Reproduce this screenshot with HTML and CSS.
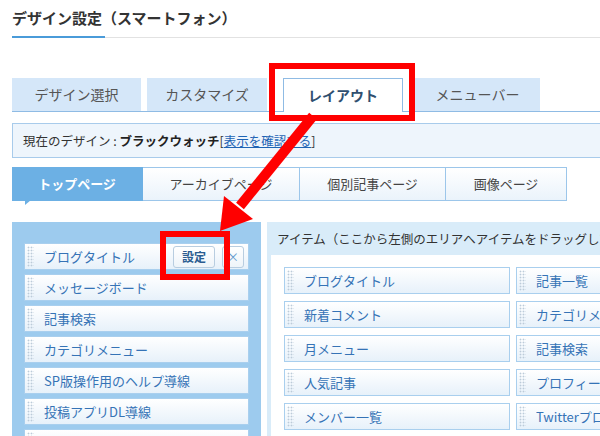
FILE: index.html
```html
<!DOCTYPE html>
<html lang="ja">
<head>
    <meta charset="UTF-8">
    <title>デザイン設定（スマートフォン）</title>
    <link rel="stylesheet" href="styles.css">
</head>
<body>
    <div class="page">
        <div class="title-bar">
            <h1 class="title">デザイン設定（スマートフォン）</h1>
        </div>

        <ul class="tabs">
            <li class="tab tab-design">デザイン選択</li>
            <li class="tab tab-custom">カスタマイズ</li>
            <li class="tab tab-layout active">レイアウト</li>
            <li class="tab tab-menu">メニューバー</li>
        </ul>

        <div class="current">
            現在のデザイン : <b>ブラックウォッチ</b>[<a href="#">表示を確認する</a>]
        </div>

        <ul class="subtabs">
            <li class="subtab sub-top active">トップページ</li>
            <li class="subtab sub-archive">アーカイブページ</li>
            <li class="subtab sub-entry">個別記事ページ</li>
            <li class="subtab sub-image">画像ページ</li>
        </ul>

        <div class="layout">
            <div class="area">
                <div class="item">
                    <span class="grip"></span>
                    <span class="item-name">ブログタイトル</span>
                    <span class="btn btn-setting">設定</span>
                    <span class="btn btn-close">×</span>
                </div>
                <div class="item"><span class="grip"></span><span class="item-name">メッセージボード</span></div>
                <div class="item"><span class="grip"></span><span class="item-name">記事検索</span></div>
                <div class="item"><span class="grip"></span><span class="item-name">カテゴリメニュー</span></div>
                <div class="item"><span class="grip"></span><span class="item-name">SP版操作用のヘルプ導線</span></div>
                <div class="item"><span class="grip"></span><span class="item-name">投稿アプリDL導線</span></div>
                <div class="item"><span class="grip"></span><span class="item-name"></span></div>
            </div>

            <div class="items-panel">
                <div class="items-head">アイテム（ここから左側のエリアへアイテムをドラッグしてください）</div>
                <div class="items-grid">
                    <div class="item"><span class="grip"></span><span class="item-name">ブログタイトル</span></div>
                    <div class="item"><span class="grip"></span><span class="item-name">記事一覧</span></div>
                    <div class="item"><span class="grip"></span><span class="item-name">新着コメント</span></div>
                    <div class="item"><span class="grip"></span><span class="item-name">カテゴリメニュー</span></div>
                    <div class="item"><span class="grip"></span><span class="item-name">月メニュー</span></div>
                    <div class="item"><span class="grip"></span><span class="item-name">記事検索</span></div>
                    <div class="item"><span class="grip"></span><span class="item-name">人気記事</span></div>
                    <div class="item"><span class="grip"></span><span class="item-name">プロフィール</span></div>
                    <div class="item"><span class="grip"></span><span class="item-name">メンバー一覧</span></div>
                    <div class="item"><span class="grip"></span><span class="item-name">Twitterプロフィール</span></div>
                </div>
            </div>
        </div>

        <!-- annotations drawn over the screenshot -->
        <div class="mark mark-tab"></div>
        <div class="mark mark-btn"></div>
        <svg class="arrow" width="600" height="436" viewBox="0 0 600 436">
            <line x1="313" y1="116" x2="240" y2="206" stroke="#f00" stroke-width="10"/>
            <polygon points="220,231 253,219 224,196" fill="#f00"/>
        </svg>
    </div>
</body>
</html>
```

FILE: styles.css
```css
* {
    box-sizing: border-box;
}
body {
    margin: 0;
    width: 600px;
    height: 436px;
    overflow: hidden;
    background-color: #fff;
    font-family: "Noto Sans CJK JP", "Noto Sans", sans-serif;
    color: #333;
}
.page {
    position: relative;
    width: 680px;
    padding-left: 12px;
}
ul {
    list-style: none;
    margin: 0;
    padding: 0;
}

/* title */
.title-bar {
    position: relative;
    padding-top: 7px;
    height: 38px;
    border-bottom: 1px solid #e2e2e2;
}
.title-bar::after {
    content: "";
    position: absolute;
    left: 0;
    bottom: -1px;
    width: 93px;
    height: 2px;
    background-color: #4a9bd9;
}
.title {
    margin: 0;
    font-size: 15px;
    line-height: 22px;
    font-weight: bold;
    color: #333;
}

/* main tabs */
.tabs {
    display: flex;
    align-items: flex-end;
    margin-top: 40px;
    height: 34px;
    border-bottom: 1px solid #8fbbe4;
}
.tab {
    height: 33px;
    line-height: 33px;
    text-align: center;
    font-size: 14px;
    color: #555;
    background-color: #d5e7f9;
}
.tab-design {
    width: 129px;
    margin-right: 6px;
}
.tab-custom {
    width: 120px;
    margin-right: 16px;
}
.tab-layout {
    width: 120px;
    margin-right: 12px;
}
.tab-menu {
    width: 125px;
}
.tab.active {
    height: 34px;
    line-height: 32px;
    margin-bottom: -1px;
    background-color: #fff;
    border: 1px solid #8fbbe4;
    border-bottom: none;
    color: #2f4f70;
    font-weight: bold;
}

/* current design */
.current {
    margin-top: 11px;
    height: 35px;
    line-height: 33px;
    padding-left: 10px;
    font-size: 12.5px;
    color: #333;
    background-color: #eef5fc;
    border: 1px solid #a8cbeb;
}
.current b {
    color: #222;
}
.current a {
    color: #1e64b4;
}

/* page tabs */
.subtabs {
    display: flex;
    margin-top: 9px;
    height: 34px;
}
.subtab {
    position: relative;
    height: 34px;
    line-height: 32px;
    text-align: center;
    font-size: 13px;
    color: #444;
    background: linear-gradient(#fff, #eaf3fb);
    border: 1px solid #9cc6ea;
    border-left: none;
}
.sub-top {
    width: 131px;
}
.sub-archive {
    width: 157px;
}
.sub-entry {
    width: 146px;
}
.sub-image {
    width: 121px;
}
.subtab.active {
    background: #6cb0e4;
    border-color: #6cb0e4;
    color: #fff;
    font-weight: bold;
}
.subtab.active::after {
    content: "";
    position: absolute;
    left: 13px;
    bottom: -5px;
    border-top: 5px solid #6cb0e4;
    border-right: 6px solid transparent;
}

/* layout area */
.layout {
    display: flex;
    align-items: flex-start;
    gap: 6px;
    margin-top: 21px;
}
.area {
    width: 249px;
    padding: 21px 12px 20px 12px;
    background-color: #9dcbee;
}
.area .item {
    margin-bottom: 4px;
}
.item {
    display: flex;
    align-items: center;
    height: 27px;
    padding: 2px 4px 2px 2px;
    background: linear-gradient(#fff, #e7f1fa);
    border: 1px solid #a9cfee;
}
.grip {
    align-self: stretch;
    width: 7px;
    background-image: radial-gradient(circle, #bccbd9 0.8px, transparent 1.1px);
    background-size: 3px 3px;
}
.item-name {
    flex: 1;
    margin-left: 10px;
    font-size: 13px;
    color: #3573b6;
    white-space: nowrap;
    overflow: hidden;
}
.btn {
    height: 22px;
    line-height: 20px;
    text-align: center;
    font-size: 12px;
    background: linear-gradient(#fff, #eef4f9);
    border: 1px solid #b8cde0;
    border-radius: 3px;
}
.btn-setting {
    width: 42px;
    color: #2a5c90;
    font-weight: bold;
}
.btn-close {
    width: 22px;
    margin-left: 7px;
    color: #5f97cc;
}

/* item list */
.items-panel {
    width: 400px;
    padding-left: 4px;
    background-color: #d9ecf9;
}
.items-head {
    height: 33px;
    line-height: 34px;
    padding-left: 6px;
    font-size: 12.5px;
    color: #333;
    white-space: nowrap;
    overflow: hidden;
}
.items-grid {
    display: grid;
    grid-template-columns: 226px 226px;
    column-gap: 6px;
    row-gap: 7px;
    padding: 12px 0 20px 13px;
    background-color: #fff;
}

/* red annotations */
.mark {
    position: absolute;
    border: 6px solid #f00;
}
.mark-tab {
    left: 269px;
    top: 63px;
    width: 146px;
    height: 58px;
}
.mark-btn {
    left: 160px;
    top: 231px;
    width: 70px;
    height: 49px;
}
.arrow {
    position: absolute;
    left: 0;
    top: 0;
}
```
